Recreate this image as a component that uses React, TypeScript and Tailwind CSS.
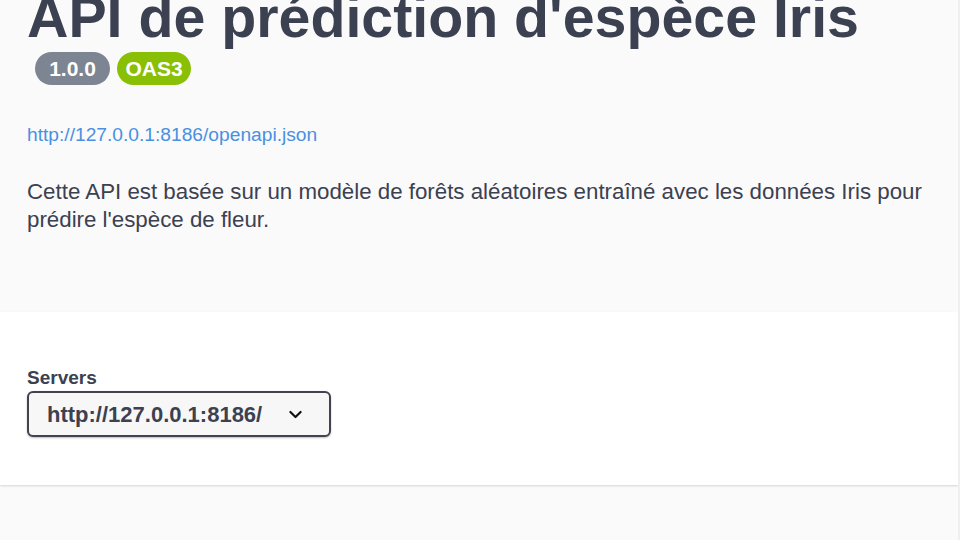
import type { ReactNode } from "react";

function Badge({ label, tone }: { label: string; tone: "gray" | "green" }): ReactNode {
  const style = tone === "gray" ? "bg-[#7d8492] w-[75px]" : "bg-[#89bf04] w-[74px]";
  return (
    <span
      className={`${style} inline-flex h-[33px] items-center justify-center rounded-full text-[21px] font-bold leading-none text-white`}
    >
      {label}
    </span>
  );
}

function Info(): ReactNode {
  return (
    <section className="bg-[#fafafa] pl-[27px] pr-[20px] h-[312px] overflow-hidden">
      <h1 className="mt-[-11px] whitespace-nowrap text-[57.3px] font-bold leading-[57px] text-[#3b4151]">
        API de prédiction d'espèce Iris
      </h1>
      <div className="mt-[6px] flex gap-[7px] pl-[8px]">
        <Badge label="1.0.0" tone="gray" />
        <Badge label="OAS3" tone="green" />
      </div>
      <a href="#" className="mt-[40px] block text-[19.2px] leading-[19px] text-[#4990e2]">
        http://127.0.0.1:8186/openapi.json
      </a>
      <p className="mt-[34px] text-[22.3px] leading-[28px] text-[#3b4151]">
        Cette API est basée sur un modèle de forêts aléatoires entraîné avec les données Iris pour
        prédire l'espèce de fleur.
      </p>
    </section>
  );
}

function Servers(): ReactNode {
  return (
    <section className="h-[173px] bg-white pl-[27px] pt-[55px] shadow-[0_1px_2px_0_rgba(0,0,0,0.15)]">
      <div className="text-[19px] font-bold leading-[22px] text-[#3b4151]">Servers</div>
      <button
        type="button"
        className="mt-[2px] flex h-[46px] w-[304px] items-center rounded-[6px] border-2 border-[#41444e] bg-[#f7f7f7] pl-[18px] text-[22px] font-bold text-[#3b4151] shadow-[0_1px_2px_0_rgba(0,0,0,0.25)]"
      >
        <span>http://127.0.0.1:8186/</span>
        <svg
          className="ml-[25px]"
          width="17"
          height="17"
          viewBox="0 0 20 20"
          fill="none"
          stroke="#111"
          strokeWidth="2.6"
          strokeLinecap="round"
          strokeLinejoin="round"
        >
          <path d="M4 7l6 6 6-6" />
        </svg>
      </button>
    </section>
  );
}

export default function App(): ReactNode {
  return (
    <div className="flex h-[540px] w-[960px] overflow-hidden bg-[#fafafa] font-['Liberation_Sans',Arial,sans-serif]">
      <div className="flex-1">
        <Info />
        <Servers />
      </div>
      <div className="w-[2px] bg-[#efefef]" />
    </div>
  );
}
